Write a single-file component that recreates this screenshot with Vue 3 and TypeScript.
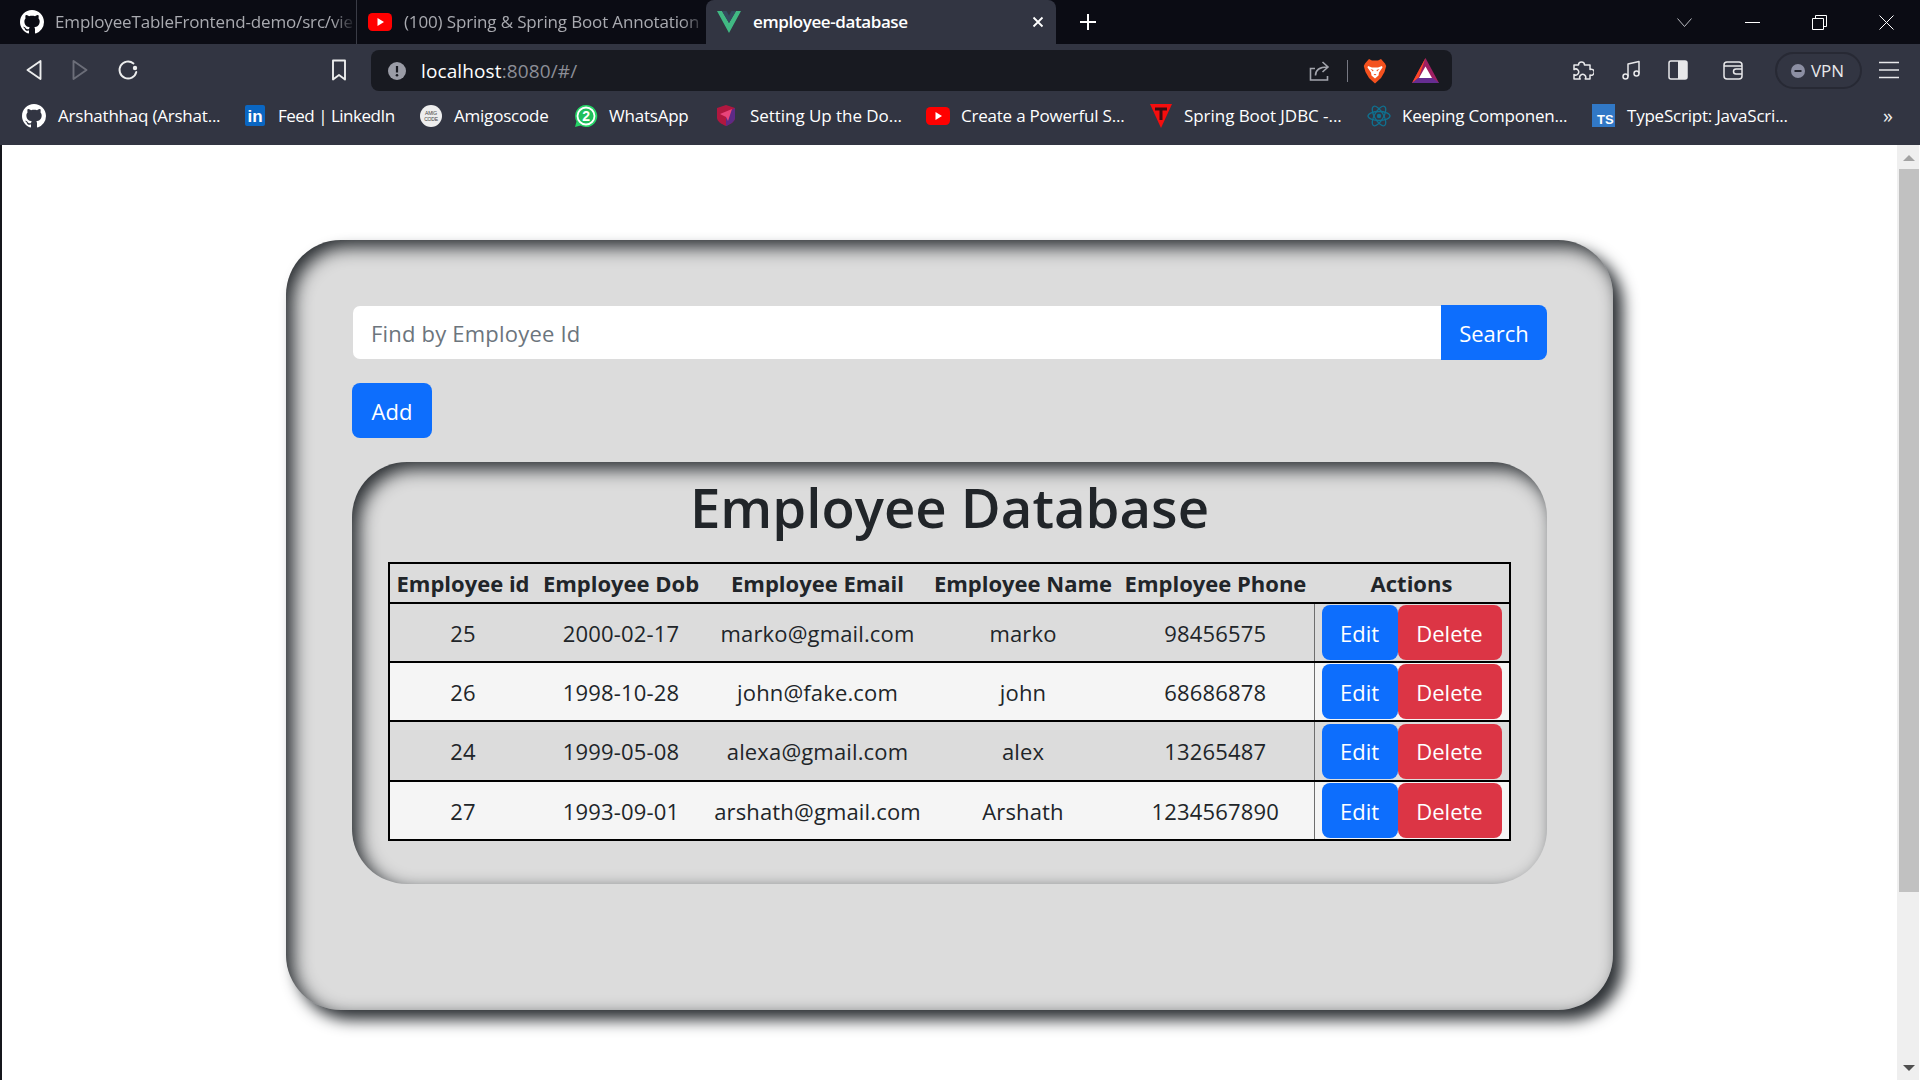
<script setup lang="ts">
interface Employee { id: number; dob: string; email: string; name: string; phone: string }
const employees: Employee[] = [
  { id: 25, dob: '2000-02-17', email: 'marko@gmail.com', name: 'marko', phone: '98456575' },
  { id: 26, dob: '1998-10-28', email: 'john@fake.com', name: 'john', phone: '68686878' },
  { id: 24, dob: '1999-05-08', email: 'alexa@gmail.com', name: 'alex', phone: '13265487' },
  { id: 27, dob: '1993-09-01', email: 'arshath@gmail.com', name: 'Arshath', phone: '1234567890' },
]
const headers = ['Employee id', 'Employee Dob', 'Employee Email', 'Employee Name', 'Employee Phone', 'Actions']
const github = 'M8 0C3.58 0 0 3.58 0 8c0 3.54 2.29 6.53 5.47 7.59.4.07.55-.17.55-.38 0-.19-.01-.82-.01-1.49-2.01.37-2.53-.49-2.69-.94-.09-.23-.48-.94-.82-1.13-.28-.15-.68-.52-.01-.53.63-.01 1.08.58 1.23.82.72 1.21 1.87.87 2.33.66.07-.52.28-.87.51-1.07-1.78-.2-3.64-.89-3.64-3.95 0-.87.31-1.59.82-2.15-.08-.2-.36-1.02.08-2.12 0 0 .67-.21 2.2.82.64-.18 1.32-.27 2-.27.68 0 1.36.09 2 .27 1.53-1.04 2.2-.82 2.2-.82.44 1.1.16 1.92.08 2.12.51.56.82 1.27.82 2.15 0 3.07-1.87 3.75-3.65 3.95.29.25.54.73.54 1.48 0 1.07-.01 1.93-.01 2.2 0 .21.15.46.55.38A8.013 8.013 0 0016 8c0-4.42-3.58-8-8-8z'
</script>

<template>
  <div class="window">
    <header class="chrome">
      <div class="tabstrip">
        <div class="tab tab-one">
          <svg class="tab-icon" viewBox="0 0 16 16"><path :d="github" fill="#fff" /></svg>
          <span class="tab-title">EmployeeTableFrontend-demo/src/vie</span>
        </div>
        <div class="tab tab-two">
          <svg class="tab-icon" viewBox="0 0 24 24"><rect x="0" y="3" width="24" height="18" rx="4.5" fill="#f00" /><path d="M9.5 8v8l6.5-4z" fill="#fff" /></svg>
          <span class="tab-title">(100) Spring &amp; Spring Boot Annotation</span>
        </div>
        <div class="tab tab-active">
          <svg class="tab-icon" viewBox="0 0 24 22"><path d="M0 0h5l7 12L19 0h5L12 22z" fill="#41b883" /><path d="M5 0h4.500l2.500 4.500L14.500 0H19l-7 12z" fill="#34495e" /></svg>
          <span class="tab-title active-title">employee-database</span>
          <svg class="tab-close" viewBox="0 0 12 12"><path d="M1.500 1.500l9 9m0-9l-9 9" stroke="#fff" stroke-width="1.800" fill="none" /></svg>
        </div>
        <svg class="new-tab" viewBox="0 0 18 18"><path d="M9 1v16M1 9h16" stroke="#fff" stroke-width="2" /></svg>
        <div class="controls">
          <svg class="ctl-chevron" viewBox="0 0 15 9"><path d="M.5.500l7 8 7-8" stroke="#b9bac0" fill="none" /></svg>
          <svg class="ctl ctl-min" viewBox="0 0 15 15"><path d="M0 7.500h15" stroke="#fff" /></svg>
          <svg class="ctl ctl-max" viewBox="0 0 15 15"><path d="M.5 3.500h11v11H.5zM3.500 3V.500h11v11H12" stroke="#fff" fill="none" /></svg>
          <svg class="ctl ctl-close" viewBox="0 0 15 15"><path d="M.5.500l14 14m0-14l-14 14" stroke="#fff" fill="none" /></svg>
        </div>
      </div>

      <div class="toolbar">
        <svg class="tool" viewBox="0 0 24 24"><path d="M19.500 3L6.500 12l13 9z" class="stroke" /></svg>
        <svg class="tool tool-fwd" viewBox="0 0 24 24"><path d="M4.500 3l13 9-13 9z" class="stroke dim" /></svg>
        <svg class="tool tool-reload" viewBox="0 0 24 24"><path d="M20.300 14A8.500 8.500 0 1 1 17.500 5.500" class="stroke" /><circle cx="19" cy="10" r="2.200" fill="#eceded" /></svg>
        <svg class="tool tool-mark" viewBox="0 0 24 24"><path d="M6 2.500h12v19l-6-4.500-6 4.500z" class="stroke" /></svg>
        <div class="urlbar">
          <svg class="info" viewBox="0 0 18 18"><circle cx="9" cy="9" r="9" fill="#9a9ca6" /><path d="M9 4v6.500" stroke="#181a21" stroke-width="2.200" /><circle cx="9" cy="13.300" r="1.300" fill="#181a21" /></svg>
          <span class="url"><span class="host">localhost</span><span class="port">:8080/#/</span></span>
          <svg class="share" viewBox="0 0 24 24"><path d="M8 9.500H3.500V21h17v-4" stroke="#a3a5ad" stroke-width="1.600" fill="none" /><path d="M8.500 16.500c0-5.500 4-8.500 12-8.500M15.500 3l5.500 5-5.500 5" stroke="#a3a5ad" stroke-width="1.600" fill="none" /></svg>
          <i class="url-divider"></i>
          <svg class="brave" viewBox="0 0 24 26">
            <path d="M6 1l3 1.500h6L18 1l4 4.500 1.200 2.500-1.700 6-3.500 6-6 5.500-6-5.500-3.500-6L.8 8 2 5.500z" fill="#f4511e" />
            <path d="M5 8l4 1.500h6L19 8l.5 1.500L16 14.500l-.5 3L12 20.500l-3.500-3-.5-3L4.500 9.500z" fill="#fff" />
            <path d="M7.500 11l3 1-.5 1.500zM16.500 11l-3 1 .5 1.500zM10.500 16h3L12 17.500z" fill="#f4511e" />
          </svg>
          <svg class="bat" viewBox="0 0 27 25">
            <path d="M13.500 0L27 25H0z" fill="#9e1f63" />
            <path d="M13.500 0L0 25l6.500-5z" fill="#ff4724" />
            <path d="M0 25l6-5h15l6 5z" fill="#662d91" />
            <path d="M13.500 8.500L20 20H7z" fill="#fff" />
          </svg>
        </div>
        <svg class="tool tool-puzzle" viewBox="0 0 24 24"><path d="M4 7h4.500a3 3 0 1 1 6 0H20v4.500a3 3 0 1 1 0 5.500V21h-4.800a3 3 0 1 0-5 0H4v-4.500a3 3 0 1 0 0-5z" class="thin" /></svg>
        <svg class="tool tool-music" viewBox="0 0 24 24"><path d="M9 18.500V6l11-2.500v12" class="thin" /><circle cx="6.500" cy="18.500" r="2.500" class="thin" /><circle cx="17.500" cy="15.500" r="2.500" class="thin" /></svg>
        <svg class="tool tool-side" viewBox="0 0 24 24"><rect x="3" y="3" width="18" height="18" rx="2" class="thin" /><rect x="12" y="3" width="9" height="18" fill="#e8e8ea" /></svg>
        <svg class="tool tool-wallet" viewBox="0 0 24 24"><rect x="3" y="4" width="18" height="17" rx="3" class="thin" /><path d="M3 8h18" class="thin" /><path d="M21 11h-6a2 2 0 0 0 0 5h6" class="thin" /></svg>
        <div class="vpn">
          <svg class="vpn-icon" viewBox="0 0 14 14"><circle cx="7" cy="7" r="7" fill="#8c8fa3" /><path d="M3.500 7h7" stroke="#23252f" stroke-width="2" /></svg>
          <span>VPN</span>
        </div>
        <svg class="tool tool-menu" viewBox="0 0 24 24"><path d="M2 4.500h20M2 12h20M2 19.500h20" class="thin" /></svg>
      </div>

      <nav class="bookmarks">
        <a class="bm">
          <svg class="bm-icon first" viewBox="0 0 16 16"><path :d="github" fill="#fff" /></svg>
          <span>Arshathhaq (Arshat...</span>
        </a>
        <a class="bm">
          <span class="li-icon">in</span>
          <span class="tight">Feed | LinkedIn</span>
        </a>
        <a class="bm">
          <svg class="bm-icon" viewBox="0 0 24 24"><circle cx="12" cy="12" r="11" fill="#eee" /><text x="12" y="10.500" text-anchor="middle" font-size="5" font-family="Liberation Sans" fill="#444">AMIG</text><text x="12" y="16.500" text-anchor="middle" font-size="5" font-family="Liberation Sans" fill="#444">CODE</text></svg>
          <span>Amigoscode</span>
        </a>
        <a class="bm">
          <svg class="bm-icon" viewBox="0 0 24 24"><path d="M12 1a11 11 0 0 0-9.500 16.500L1 23l5.700-1.500A11 11 0 1 0 12 1z" fill="#25d366" /><circle cx="12" cy="12" r="8.500" fill="#1fbf5c" stroke="#fff" stroke-width="1.800" /><text x="12" y="17" text-anchor="middle" font-size="14" font-weight="700" font-family="Liberation Sans" fill="#fff">2</text></svg>
          <span>WhatsApp</span>
        </a>
        <a class="bm">
          <svg class="bm-icon shield" viewBox="0 0 18 21"><path d="M9 0l9 3v10c0 3-4 6-9 8-5-2-9-5-9-8V3z" fill="#b0173f" /><path d="M9 21V8l9-5v10c0 3-4 6-9 8z" fill="#5d2a86" /><path d="M3 9l12-5-4 12-2-4z" fill="#e8447a" /></svg>
          <span class="wide">Setting Up the Do...</span>
        </a>
        <a class="bm">
          <svg class="bm-icon" viewBox="0 0 24 24"><rect x="0" y="3" width="24" height="18" rx="4.500" fill="#f00" /><path d="M9.500 8v8l6.500-4z" fill="#fff" /></svg>
          <span>Create a Powerful S...</span>
        </a>
        <a class="bm">
          <svg class="bm-icon" viewBox="0 0 22 24"><path d="M0 0h22L11 24z" fill="#f50e0e" /><path d="M5 3.500h12v3h-4.500V16h-3V6.500H5z" fill="#3a0d12" /></svg>
          <span class="wide">Spring Boot JDBC -...</span>
        </a>
        <a class="bm">
          <svg class="bm-icon" viewBox="0 0 24 24"><g fill="none" stroke="#10708f" stroke-width="1.300"><ellipse cx="12" cy="12" rx="11" ry="4.500" /><ellipse cx="12" cy="12" rx="11" ry="4.500" transform="rotate(60 12 12)" /><ellipse cx="12" cy="12" rx="11" ry="4.500" transform="rotate(120 12 12)" /></g><circle cx="12" cy="12" r="2.200" fill="#10708f" /></svg>
          <span>Keeping Componen...</span>
        </a>
        <a class="bm">
          <span class="ts-icon">TS</span>
          <span>TypeScript: JavaScri...</span>
        </a>
        <span class="more">»</span>
      </nav>
    </header>

    <div class="page">
      <main class="main">
        <section class="card">
          <div class="search">
            <input class="search-input" placeholder="Find by Employee Id" />
            <button class="btn blue search-btn">Search</button>
          </div>
          <button class="btn blue add-btn">Add</button>
          <section class="panel">
            <h1 class="title">Employee Database</h1>
            <table class="emp">
              <colgroup>
                <col class="c1" /><col class="c2" /><col class="c3" /><col class="c4" /><col class="c5" /><col class="c6" />
              </colgroup>
              <thead>
                <tr><th v-for="h in headers" :key="h">{{ h }}</th></tr>
              </thead>
              <tbody>
                <tr v-for="e in employees" :key="e.id">
                  <td>{{ e.id }}</td>
                  <td>{{ e.dob }}</td>
                  <td>{{ e.email }}</td>
                  <td>{{ e.name }}</td>
                  <td>{{ e.phone }}</td>
                  <td class="actions">
                    <div class="action-row">
                      <button class="btn blue edit">Edit</button>
                      <button class="btn red delete">Delete</button>
                    </div>
                  </td>
                </tr>
              </tbody>
            </table>
          </section>
        </section>
      </main>
      <aside class="scrollbar">
        <i class="arrow up"></i>
        <i class="thumb"></i>
        <i class="arrow down"></i>
      </aside>
    </div>
  </div>
</template>

<style>
html, body { margin: 0; overflow: hidden; }
</style>

<style scoped>
.window {
  width: 1920px;
  height: 1080px;
  box-sizing: border-box;
  padding-left: 2px;
  background: #15161c;
  font-family: "Open Sans", "Noto Sans", sans-serif;
  overflow: hidden;
}
.chrome { margin-left: -2px; padding-left: 2px; background: #323542; height: 145px; }
svg { display: block; flex: none; }

.tabstrip { height: 44px; margin-left: -2px; display: flex; align-items: center; background: #0b0c14; color: #a9aab0; }
.tab { height: 44px; display: flex; align-items: center; box-sizing: border-box; font-size: 17px; overflow: hidden; white-space: nowrap; }
.tab-one { width: 357px; padding-left: 20px; border-right: 1px solid #3a3c46; }
.tab-two { width: 349px; padding-left: 11px; }
.tab-active { width: 350px; padding-left: 11px; background: #323542; border-radius: 8px 8px 0 0; color: #fff; }
.tab-icon { width: 24px; height: 24px; }
.tab-one .tab-icon { margin-right: 11px; }
.tab-two .tab-icon { margin-right: 12px; }
.tab-active .tab-icon { margin-right: 12px; height: 22px; }
.tab-title { flex: 1; min-width: 0; margin-bottom: 2px; overflow: hidden; letter-spacing: -0.15px; -webkit-mask-image: linear-gradient(90deg, #000 92%, transparent); mask-image: linear-gradient(90deg, #000 92%, transparent); }
.active-title { font-weight: 600; letter-spacing: -0.4px; -webkit-mask-image: none; mask-image: none; }
.tab-close { width: 12px; height: 12px; margin-right: 12px; }
.new-tab { width: 18px; height: 18px; margin-left: 23px; }
.controls { margin-left: auto; display: flex; align-items: center; height: 44px; }
.ctl-chevron { width: 15px; height: 9px; margin-right: 53px; }
.ctl { width: 15px; height: 15px; }
.ctl-min { margin-right: 52px; }
.ctl-max { margin-right: 52px; }
.ctl-close { margin-right: 26px; }

.toolbar { height: 41px; padding-top: 6px; margin-left: -2px; display: flex; align-items: center; padding-left: 21px; }
.tool { width: 24px; height: 24px; margin-bottom: 2px; }
.stroke { fill: none; stroke: #eceded; stroke-width: 1.900; stroke-linejoin: round; stroke-linecap: round; }
.dim { stroke: #6c6e79; }
.thin { fill: none; stroke: #e8e8ea; stroke-width: 1.500; stroke-linejoin: round; }
.tool-fwd { margin-left: 24px; }
.tool-reload { margin-left: 23px; }
.tool-mark { margin-left: 187px; }
.urlbar { margin-left: 20px; width: 1081px; height: 41px; background: #181a21; border-radius: 8px; display: flex; align-items: center; box-sizing: border-box; padding-left: 17px; }
.info { width: 18px; height: 18px; margin-right: 15px; }
.url { flex: 1; font-size: 19px; letter-spacing: 0.12px; }
.host { color: #fff; }
.port { color: #8c8e97; }
.share { width: 24px; height: 24px; margin-right: 16px; }
.url-divider { width: 1px; height: 22px; background: #777983; margin-right: 15px; }
.brave { width: 24px; height: 26px; margin-right: 25px; }
.bat { width: 27px; height: 25px; margin-right: 13px; }
.tool-puzzle { margin-left: 118px; }
.tool-music { margin-left: 25px; }
.tool-side { margin-left: 23px; }
.tool-wallet { margin-left: 31px; }
.vpn { margin-left: 30px; width: 87px; height: 37px; box-sizing: border-box; border: 2px solid #272934; border-radius: 19px; display: flex; align-items: center; padding-left: 14px; color: #e8e8ea; font-size: 17px; letter-spacing: -0.1px; }
.vpn-icon { width: 14px; height: 14px; margin-right: 6px; }
.tool-menu { margin-left: 15px; }

.bookmarks { height: 54px; margin-left: -2px; padding: 0 0 5px 22px; box-sizing: border-box; display: grid; grid-template-columns: 223px 174px 155px 143px 209px 223px 218px 225px 292px auto; align-items: center; color: #fff; font-size: 17px; letter-spacing: -0.22px; white-space: nowrap; }
.bm { display: flex; align-items: center; }
.bm-icon { width: 24px; height: 24px; margin-right: 11px; }
.first { margin-right: 12px; }
.shield { width: 18px; height: 21px; margin-right: 15px; }
.tight { letter-spacing: -0.5px; }
.wide { letter-spacing: -0.05px; }
.li-icon { width: 20px; height: 21px; margin-right: 13px; background: #0a66c2; border-radius: 2px; color: #fff; font: 700 17px/24px "Liberation Sans", sans-serif; text-align: center; letter-spacing: 0; }
.ts-icon { width: 23px; height: 23px; margin-right: 12px; box-sizing: border-box; background: #3178c6; color: #fff; font: 700 13px/32px "Liberation Sans", sans-serif; padding-left: 5px; letter-spacing: 0; overflow: hidden; }
.more { font-size: 20px; line-height: 20px; color: #eee; margin-left: -1px; }

.page { height: 935px; display: flex; background: #fff; }
.main { flex: 1; min-width: 0; padding-top: 95px; box-sizing: border-box; }
.card {
  width: 1327px;
  height: 770px;
  margin: 0 auto;
  box-sizing: border-box;
  padding: 65px 66px 0;
  background: #dcdcdc;
  border-radius: 55px;
  box-shadow: 10px 10px 15px #2e3236, inset 7px 7px 18px #262a2e;
  color: #212529;
  font-size: 22px;
}
.search { display: flex; height: 55px; }
.search-input { flex: 1; min-width: 0; height: 53px; margin: 1px 0 1px 1px; box-sizing: border-box; border: 0; border-radius: 7px 0 0 7px; padding: 0 17px 0 18px; background: #fff; font: inherit; letter-spacing: 0.2px; outline: none; }
.search-input::placeholder { color: #6c757d; opacity: 1; }
.btn { border: 0; border-radius: 8px; color: #fff; font: inherit; padding: 0; height: 55px; }
.blue { background: #0d6efd; }
.red { background: #dc3545; }
.search-btn { width: 106px; border-radius: 0 8px 8px 0; }
.add-btn { display: block; width: 80px; margin-top: 23px; }
.panel {
  margin-top: 24px;
  height: 422px;
  box-sizing: border-box;
  padding: 12px 37px 0;
  border-radius: 55px;
  box-shadow: inset 7px 7px 18px #262a2e;
}
.title { margin: 0 0 22px; font-size: 54.5px; line-height: 66px; font-weight: 600; text-align: center; }
.emp { table-layout: fixed; width: 1123px; margin-left: -1px; border-collapse: collapse; border: 2px solid #000; }
.c1 { width: 147px; } .c2 { width: 170px; } .c3 { width: 223px; } .c4 { width: 188px; } .c5 { width: 197px; } .c6 { width: 196px; }
th { height: 38px; padding: 0; font-weight: 700; border-bottom: 2px solid #000; white-space: nowrap; }
td { height: 57px; padding: 0; text-align: center; border-bottom: 2px solid #000; white-space: nowrap; letter-spacing: 0.15px; }
tbody tr:nth-child(even) { background: #f5f5f5; }
tbody tr:nth-child(3) td { height: 58px; }
.actions { border-left: 1px solid #6e6e6e; }
.action-row { display: flex; padding-left: 7px; }
.edit { width: 76px; }
.delete { width: 104px; }

.scrollbar { width: 22px; margin-right: 1px; background: #efefef; display: flex; flex-direction: column; align-items: flex-end; }
.thumb { display: block; width: 20px; height: 723px; margin-top: 8px; background: #c1c1c1; }
.arrow { display: block; width: 0; height: 0; border-left: 6px solid transparent; border-right: 6px solid transparent; margin-right: 4px; }
.up { margin-top: 10px; border-bottom: 6px solid #a3a3a3; }
.down { margin-top: auto; margin-bottom: 9px; border-top: 6px solid #505050; }
</style>
